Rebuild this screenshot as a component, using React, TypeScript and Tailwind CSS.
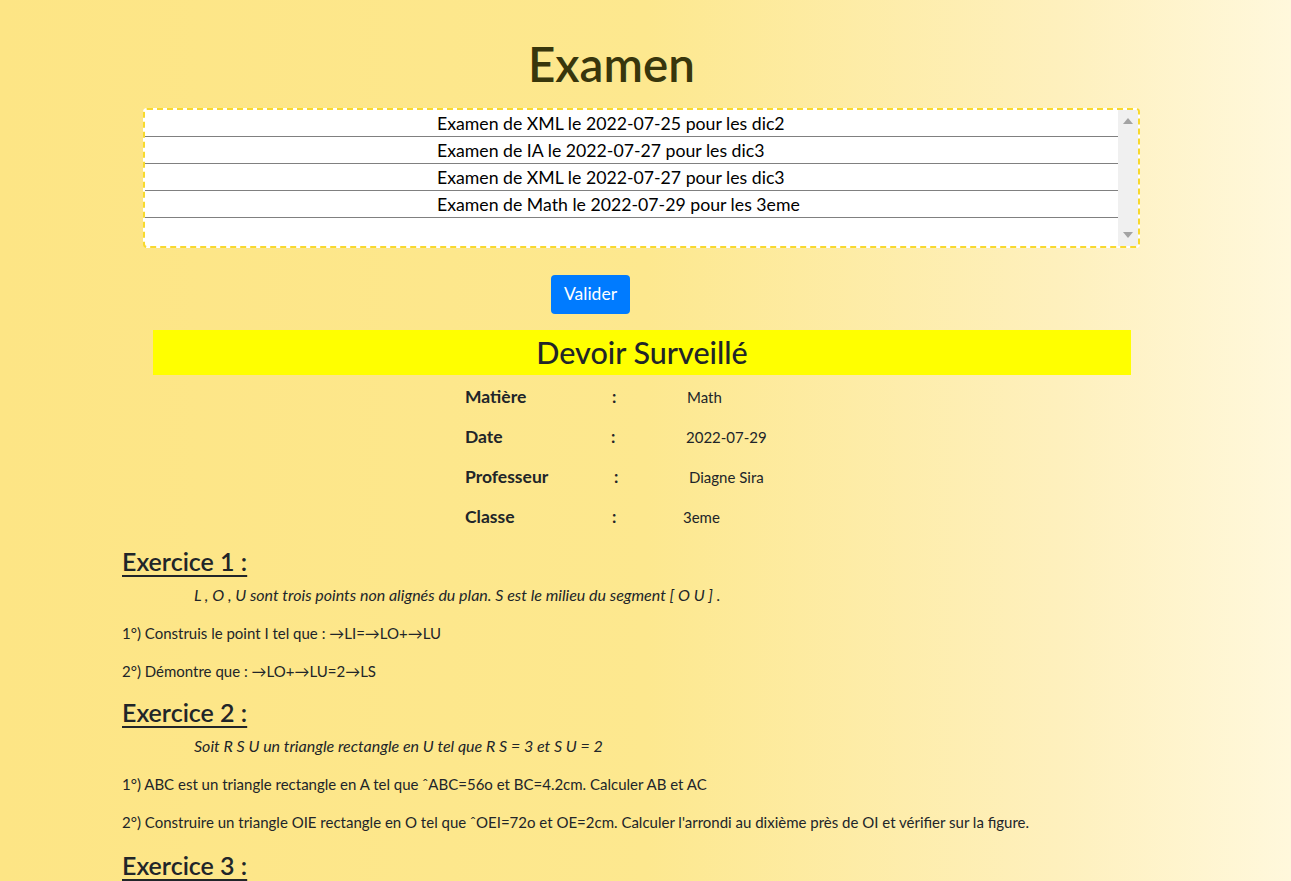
import React from "react";

const font = { fontFamily: '"Lato", "Noto Sans", sans-serif' };

function Listbox() {
  const items = [
    "Examen de XML le 2022-07-25 pour les dic2",
    "Examen de IA le 2022-07-27 pour les dic3",
    "Examen de XML le 2022-07-27 pour les dic3",
    "Examen de Math le 2022-07-29 pour les 3eme",
  ];
  return (
    <div className="ml-[143px] w-[997px] h-[140px] border-2 border-dashed border-[#f8d92e] rounded-[4px] bg-white flex overflow-hidden">
      <div className="flex-1">
        {items.map((t) => (
          <div
            key={t}
            className="h-[27px] border-b border-[#808080] pl-[292px] text-[17.7px] leading-[27px] text-black"
          >
            {t}
          </div>
        ))}
      </div>
      <div className="w-[20px] bg-[#f0f0f0] flex flex-col items-center justify-between py-[8px]">
        <svg width="10" height="6" viewBox="0 0 10 6">
          <path d="M0 6 L5 0 L10 6 Z" fill="#a3a3a3" />
        </svg>
        <svg width="10" height="6" viewBox="0 0 10 6">
          <path d="M0 0 L5 6 L10 0 Z" fill="#a3a3a3" />
        </svg>
      </div>
    </div>
  );
}

function InfoRow({
  label,
  value,
  colonCls,
  valueCls,
}: {
  label: string;
  value: string;
  colonCls: string;
  valueCls: string;
}) {
  return (
    <div className="h-[40px] flex items-center pl-[465px] text-[#212529]">
      <div className="w-[146px] font-bold text-[17.5px]">{label}</div>
      <div className={"w-[75px] font-bold text-[17px] " + colonCls}>:</div>
      <div className={"text-[15px] " + valueCls}>{value}</div>
    </div>
  );
}

function Heading({ children, mt }: { children: React.ReactNode; mt: string }) {
  return (
    <div className={"h-[34px] leading-[34px] text-[25px] font-semibold underline underline-offset-[4px] decoration-[2px] " + mt}>
      {children}
    </div>
  );
}

export default function App() {
  return (
    <div
      className="min-h-screen w-full bg-[linear-gradient(90deg,#fde585_0%,#fde88f_50%,#fef0bd_82%,#fff8dc_100%)] pb-[40px]"
      style={font}
    >
      <div className="pt-[36px]">
        <h1 className="h-[56px] leading-[56px] text-[47.5px] font-semibold text-[#38360c] pl-[528px]">
          Examen
        </h1>
      </div>
      <div className="mt-[16px]">
        <Listbox />
      </div>
      <div className="mt-[27px] pl-[551px]">
        <button className="w-[79px] h-[39px] rounded-[4px] bg-[#007bff] text-white text-[17.5px]">
          Valider
        </button>
      </div>
      <div className="mt-[16px] ml-[153px] w-[978px] h-[45px] bg-[#ffff00] flex items-center justify-center text-[30.5px] font-medium text-[#212529]">
        Devoir Surveillé
      </div>
      <div className="mt-[2px]">
        <InfoRow label="Matière" value="Math" colonCls="pl-[1px]" valueCls="pl-[1px]" />
        <InfoRow label="Date" value="2022-07-29" colonCls="" valueCls="" />
        <InfoRow label="Professeur" value="Diagne Sira" colonCls="pl-[3px]" valueCls="pl-[3px]" />
        <InfoRow label="Classe" value="3eme" colonCls="pl-[1px]" valueCls="-ml-[3px]" />
      </div>
      <div className="pl-[122px] text-[#212529] text-[15px]">
        <Heading mt="mt-[7px]">Exercice 1 :</Heading>
        <p className="mt-[6px] leading-[22px] italic text-[16px] pl-[72px]">
          L , O , U sont trois points non alignés du plan. S est le milieu du segment [ O U ] .
        </p>
        <p className="mt-[16px] leading-[22px]">1°) Construis le point I tel que : →LI=→LO+→LU</p>
        <p className="mt-[16px] leading-[22px]">2°) Démontre que : →LO+→LU=2→LS</p>
        <Heading mt="mt-[13px]">Exercice 2 :</Heading>
        <p className="mt-[6px] leading-[22px] italic text-[16px] pl-[72px]">
          Soit R S U un triangle rectangle en U tel que R S = 3 et S U = 2
        </p>
        <p className="mt-[16px] leading-[22px]">
          1°) ABC est un triangle rectangle en A tel que ˆABC=56o et BC=4.2cm. Calculer AB et AC
        </p>
        <p className="mt-[16px] leading-[22px]">
          2°) Construire un triangle OIE rectangle en O tel que ˆOEI=72o et OE=2cm. Calculer l'arrondi au dixième près de OI et vérifier sur la figure.
        </p>
        <Heading mt="mt-[15px]">Exercice 3 :</Heading>
      </div>
    </div>
  );
}
